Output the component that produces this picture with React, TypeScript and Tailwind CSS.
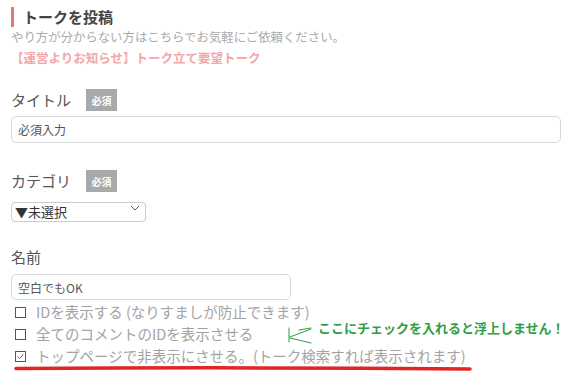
import React from "react";

function Badge() {
  return (
    <span className="ml-[15px] inline-flex h-[22px] w-[31px] items-center justify-center bg-[#a9a9a9] text-[10px] font-bold text-white">
      必須
    </span>
  );
}

function CheckRow({ label, checked }: { label: string; checked?: boolean }) {
  return (
    <label className="flex h-[22px] items-center pl-[4px]">
      <span className="flex h-[11px] w-[11px] items-center justify-center border border-[#555] bg-white">
        {checked && (
          <svg width="9" height="9" viewBox="0 0 9 9">
            <path d="M1.5 4.5 L3.5 6.5 L7.5 2.5" fill="none" stroke="#666" strokeWidth="1" />
          </svg>
        )}
      </span>
      <span className="ml-[10px] text-[14.5px] text-[#a3a3a3]">{label}</span>
    </label>
  );
}

export default function App() {
  return (
    <div
      className="relative h-[385px] w-[568px] overflow-hidden bg-white px-[11px]"
      style={{ fontFamily: '"Noto Sans CJK JP", "Noto Sans", sans-serif' }}
    >
      {/* heading */}
      <div className="mt-[7px] flex h-[20px] items-center border-l-[3px] border-[#e07a7a] pl-[9px]">
        <h2 className="text-[15px] font-bold leading-[20px] text-[#444]">トークを投稿</h2>
      </div>
      <p className="mt-[1px] h-[18px] text-[12.4px] leading-[18px] text-[#aaa]">
        やり方が分からない方はこちらでお気軽にご依頼ください。
      </p>
      <a className="mt-[3px] block h-[18px] text-[12.5px] font-bold leading-[18px] text-[#f2a7a7]">
        【運営よりお知らせ】トーク立て要望トーク
      </a>

      {/* title */}
      <div className="mt-[22px] flex h-[22px] items-center">
        <span className="text-[15px] text-[#555]">タイトル</span>
        <Badge />
      </div>
      <input
        className="mt-[5px] block h-[27px] w-[550px] rounded-[5px] border border-[#d9d9d9] px-[6px] text-[12px] text-[#555] outline-none placeholder:text-[#555]"
        placeholder="必須入力"
      />

      {/* category */}
      <div className="mt-[27px] flex h-[22px] items-center">
        <span className="text-[15px] text-[#555]">カテゴリ</span>
        <Badge />
      </div>
      <div className="relative mt-[6px] h-[20px] w-[135px]">
        <select className="h-[20px] w-[135px] appearance-none rounded-[4px] border border-[#ccc] bg-white pl-[3px] text-[13px] leading-[18px] text-[#333] outline-none">
          <option>▼未選択</option>
        </select>
        <svg className="pointer-events-none absolute right-[6px] top-[7px]" width="10" height="6" viewBox="0 0 10 6">
          <path d="M1 1 L5 5 L9 1" fill="none" stroke="#555" strokeWidth="1" />
        </svg>
      </div>

      {/* name */}
      <div className="mt-[29px] flex h-[20px] items-center">
        <span className="text-[15px] text-[#555]">名前</span>
      </div>
      <input
        className="mt-[7px] block h-[26px] w-[280px] rounded-[5px] border border-[#d9d9d9] px-[6px] text-[12px] text-[#555] outline-none placeholder:text-[#555]"
        placeholder="空白でもOK"
      />

      {/* options */}
      <div className="mt-[1px]">
        <CheckRow label="IDを表示する (なりすましが防止できます)" />
        <CheckRow label="全てのコメントのIDを表示させる" />
        <CheckRow label="トップページで非表示にさせる。(トーク検索すれば表示されます)" checked />
      </div>

      {/* annotations */}
      <span className="absolute left-[318px] top-[319px] text-[13px] font-bold leading-[18px] text-[#2f9e44]">
        ここにチェックを入れると浮上しません！
      </span>
      <svg className="absolute left-0 top-0" width="568" height="385" viewBox="0 0 568 385" pointerEvents="none">
        <g fill="none" stroke="#2f9e44" strokeWidth="1" strokeLinecap="round">
          <path d="M289 328 L289 342" />
          <path d="M290 337 L311 329" />
          <path d="M299 330 L311 328" />
          <path d="M290 338 L311 343" />
        </g>
        <path d="M16 368.5 Q240 367 470 369" fill="none" stroke="#e32424" strokeWidth="3.5" strokeLinecap="round" />
      </svg>
    </div>
  );
}
